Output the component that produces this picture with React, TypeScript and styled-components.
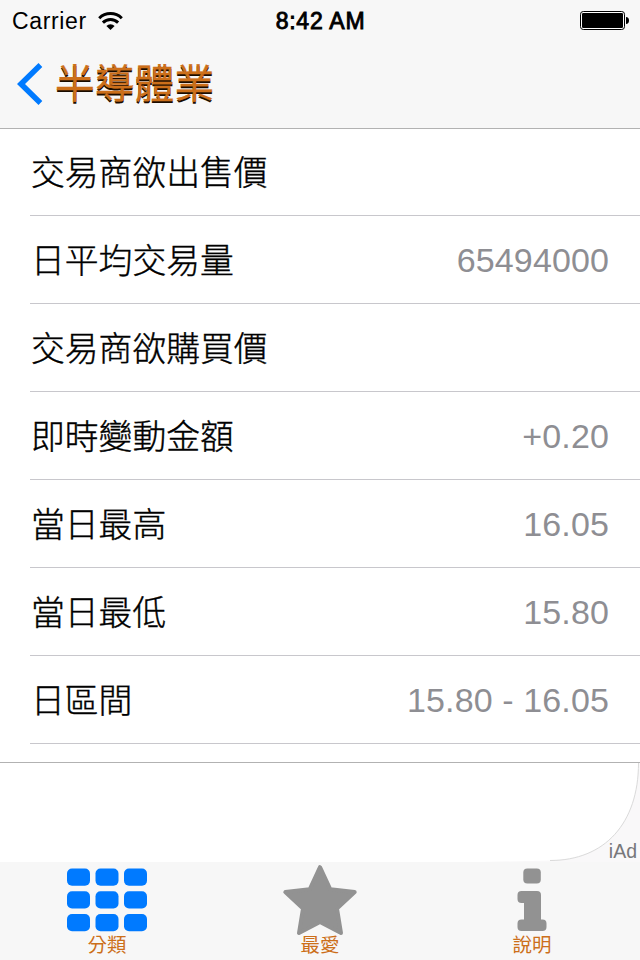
import React from "react";
import styled, { createGlobalStyle } from "styled-components";

const GlobalStyle = createGlobalStyle`
  *, *::before, *::after { box-sizing: border-box; }
  body {
    margin: 0;
    background: #fff;
    font-family: "Liberation Sans", "Noto Sans CJK TC", sans-serif;
  }
`;

const Screen = styled.div`
  display: flex;
  flex-direction: column;
  width: 640px;
  height: 960px;
  overflow: hidden;
  background: #fff;
`;

const Header = styled.header`
  position: relative;
  flex: none;
  height: 128px;
  background: #f7f7f7;
  box-shadow: 0 1px 0 #b2b2b2;
`;

const StatusBar = styled.div`
  display: grid;
  grid-template-columns: 1fr auto 1fr;
  align-items: center;
  height: 40px;
  padding: 0 11px 0 12px;
  font-size: 23px;
  line-height: 40px;
  color: #000;
`;

const Carrier = styled.div`
  display: flex;
  align-items: center;
  gap: 11px;
  letter-spacing: 0.65px;
  padding-top: 1px;
`;

const Clock = styled.div`
  letter-spacing: 0.75px;
  padding-top: 1px;
  -webkit-text-stroke: 0.9px #000;
`;

const Battery = styled.svg`
  display: block;
  justify-self: end;
`;

const Icon = styled.svg`
  display: block;
  flex: none;
`;

const NavBar = styled.nav`
  display: flex;
  align-items: center;
  height: 88px;
  padding-left: 17px;
`;

const Title = styled.h1`
  margin: -7px 0 0 12px;
  font: 400 39.8px/60px "Noto Sans CJK TC", sans-serif;
  color: #cc6f1a;
  -webkit-text-stroke: 0.3px #cc6f1a;
  text-shadow: 0 2px 0 #1a0c00;
`;

const List = styled.main`
  flex: none;
  height: 634px;
  overflow: hidden;
`;

const Row = styled.div`
  display: flex;
  align-items: center;
  justify-content: space-between;
  height: 88px;
  margin-left: 30px;
  padding: 0 31px 0 1px;
  border-bottom: 1px solid #c8c7cc;
`;

const Label = styled.span`
  margin-top: -2px;
  font: 300 33.8px/50px "Noto Sans CJK TC", sans-serif;
  color: #000;
  -webkit-text-stroke: 0.4px #000;
`;

const Value = styled.span`
  font-size: 34px;
  line-height: 40px;
  letter-spacing: 0.12px;
  color: #8e8e93;
  padding-top: 1px;
`;

const AdBanner = styled.aside`
  position: relative;
  flex: none;
  height: 100px;
  border-top: 1px solid #b2b2b2;
  background: #f9f8f9;
`;

const AdSheet = styled.svg`
  display: block;
`;

const AdMark = styled.span`
  position: absolute;
  right: 3px;
  bottom: 0;
  font-size: 19.5px;
  line-height: 22px;
  color: #77777a;
`;

const TabBar = styled.footer`
  display: grid;
  grid-template-columns: 214px 212px 212px;
  height: 98px;
  background: #f7f7f7;
`;

const Tab = styled.div`
  display: flex;
  flex-direction: column;
  align-items: center;
`;

const TabLabel = styled.span`
  margin-top: -5px;
  font: 400 19.5px/26px "Noto Sans CJK TC", sans-serif;
  color: #cc6f1a;
`;

const rows: { label: string; value?: string }[] = [
  { label: "交易商欲出售價" },
  { label: "日平均交易量", value: "65494000" },
  { label: "交易商欲購買價" },
  { label: "即時變動金額", value: "+0.20" },
  { label: "當日最高", value: "16.05" },
  { label: "當日最低", value: "15.80" },
  { label: "日區間", value: "15.80 - 16.05" },
];

const WifiIcon = () => (
  <Icon width="25" height="19" viewBox="0 0 25 19" fill="none" stroke="#000" strokeWidth="3">
    <path d="M1.200 6.200a16.200 16.200 0 0 1 22.600 0" />
    <path d="M4.900 10.600a10.800 10.800 0 0 1 15.200 0" />
    <path d="M12.500 18 8.400 13.900a5.800 5.800 0 0 1 8.200 0Z" fill="#000" stroke="none" />
  </Icon>
);

const BatteryIcon = () => (
  <Battery width="49" height="19" viewBox="0 0 49 19">
    <rect x="0.5" y="0.5" width="44" height="18" rx="2.8" fill="#fff" stroke="#000" />
    <rect x="2" y="2" width="41" height="15" rx="1.2" fill="#000" />
    <path d="M46 6c2 0 3 1.500 3 3.500s-1 3.500-3 3.500Z" fill="#000" />
  </Battery>
);

const BackIcon = () => (
  <Icon width="26" height="42" viewBox="0 0 26 42">
    <path d="M21.500 0 25.300 4 8 21 25.300 38 21.500 42 0 21Z" fill="#007aff" />
  </Icon>
);

const GridIcon = () => (
  <Icon width="80" height="74" viewBox="0 0 80 74" fill="#007aff">
    {[6.5, 29.2, 52].map((y) =>
      [0, 28.5, 57].map((x) => (
        <rect key={`${x}-${y}`} x={x} y={y} width="23" height="17.300" rx="5" />
      ))
    )}
  </Icon>
);

const StarIcon = () => (
  <Icon width="76" height="74" viewBox="0 0 76 74" fill="#929292" stroke="#929292" strokeWidth="4" strokeLinejoin="round">
    <path d="M38 5.200 48.300 27.300 72.700 30 55 46.600 59 71 38 60 17 71 21 46.600 3.300 30 27.700 27.300Z" />
  </Icon>
);

const InfoIcon = () => (
  <Icon width="30" height="74" viewBox="0 0 30 74" fill="#929292">
    <rect x="6.300" y="6.500" width="17.500" height="15" rx="4" />
    <path d="M4.500 29H20a4 4 0 0 1 4 4v24.500h1.500a4 4 0 0 1 4 4V65a4 4 0 0 1-4 4H4.500a4 4 0 0 1-4-4v-3.500a4 4 0 0 1 4-4H7V41H4.500a4 4 0 0 1-4-4v-4a4 4 0 0 1 4-4Z" />
  </Icon>
);

export default function App() {
  return (
    <>
      <GlobalStyle />
      <Screen>
        <Header>
          <StatusBar>
            <Carrier>
              Carrier
              <WifiIcon />
            </Carrier>
            <Clock>8:42 AM</Clock>
            <BatteryIcon />
          </StatusBar>
          <NavBar>
            <BackIcon />
            <Title>半導體業</Title>
          </NavBar>
        </Header>
        <List>
          {rows.map(({ label, value }) => (
            <Row key={label}>
              <Label>{label}</Label>
              {value && <Value>{value}</Value>}
            </Row>
          ))}
        </List>
        <AdBanner>
          <AdSheet width="640" height="99" viewBox="0 0 640 99">
            <path d="M0 0H638.500C638.500 60 605 97.500 550 97.500L480 99H0Z" fill="#fff" />
            <path d="M638.500 0C638.500 60 605 97.500 550 97.500" fill="none" stroke="#dadada" />
          </AdSheet>
          <AdMark>iAd</AdMark>
        </AdBanner>
        <TabBar>
          <Tab>
            <GridIcon />
            <TabLabel>分類</TabLabel>
          </Tab>
          <Tab>
            <StarIcon />
            <TabLabel>最愛</TabLabel>
          </Tab>
          <Tab>
            <InfoIcon />
            <TabLabel>說明</TabLabel>
          </Tab>
        </TabBar>
      </Screen>
    </>
  );
}
